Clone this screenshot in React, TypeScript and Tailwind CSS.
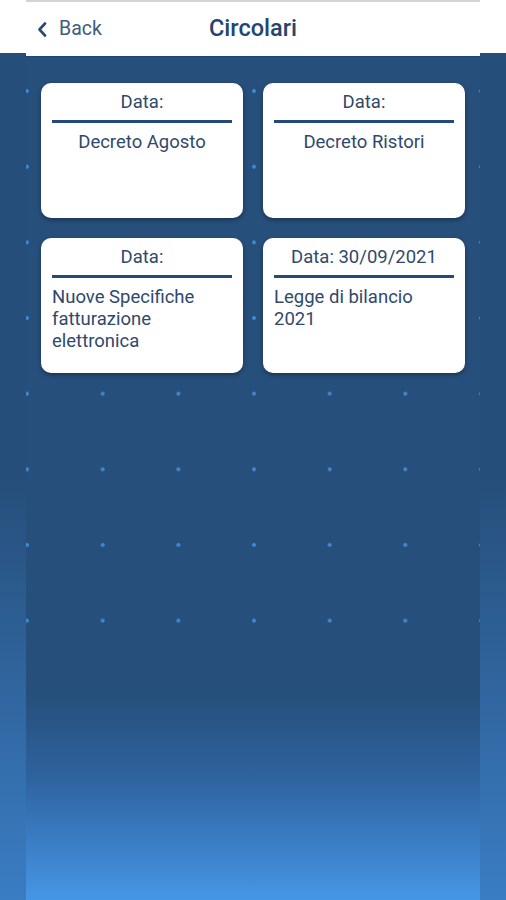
import React from 'react';

const cards = [
  { date: 'Data:', title: 'Decreto Agosto', center: true },
  { date: 'Data:', title: 'Decreto Ristori', center: true },
  { date: 'Data:', title: 'Nuove Specifiche fatturazione elettronica', center: false },
  { date: 'Data: 30/09/2021', title: 'Legge di bilancio 2021', center: false },
];

function Side() {
  return (
    <div className="w-[26px] flex flex-col">
      <div className="h-[53px] bg-white" />
      <div className="flex-1 bg-[linear-gradient(to_bottom,#264e7a_0%,#264e7a_50%,#3a7dc3_100%)]" />
    </div>
  );
}

function Card({ date, title, center }: { date: string; title: string; center: boolean }) {
  return (
    <div className="h-[135px] bg-white rounded-[10px] px-[11px] pt-2 shadow-[0_2px_4px_rgba(0,0,0,0.35)] text-[#30496b] text-[18.5px] leading-[22px]">
      <div className="text-center">{date}</div>
      <div className="h-[3px] bg-[#24497a] mt-[7px] mb-[8px]" />
      <div className={center ? 'text-center' : 'text-left'}>{title}</div>
    </div>
  );
}

export default function App() {
  return (
    <div
      className="w-[506px] h-[900px] flex overflow-hidden"
      style={{ fontFamily: 'Roboto, "Noto Sans", sans-serif' }}
    >
      <Side />
      <div className="w-[454px] flex flex-col">
        <header className="h-[57px] bg-white border-t-2 border-[#d3d3d3] border-b border-b-[#1f4570] flex items-center relative">
          <button className="flex items-center gap-[12px] pl-[11px] text-[#3e5c80] text-[19.5px]">
            <svg width="10" height="15" viewBox="0 0 10 15" fill="none">
              <path d="M8 1.5 L2.5 7.5 L8 13.5" stroke="#2a4b70" strokeWidth="2.6" strokeLinecap="round" strokeLinejoin="round" />
            </svg>
            <span>Back</span>
          </button>
          <h1 className="absolute left-0 right-0 text-center text-[23.5px] font-medium text-[#24466c] pointer-events-none">
            Circolari
          </h1>
        </header>
        <main className="h-[603px] bg-[#274f7b] bg-[radial-gradient(circle,#3f86d0_1.6px,transparent_2.2px)] bg-[length:75.67px_75.67px] bg-[position:-36.8px_-3.8px] px-[15px] pt-[26px]">
          <div className="grid grid-cols-2 gap-[20px]">
            {cards.map((c, i) => (
              <Card key={i} {...c} />
            ))}
          </div>
        </main>
        <div className="flex-1 bg-[linear-gradient(to_bottom,#274f7b_0%,#264f7c_15%,#2f64a0_50%,#4696e6_100%)]" />
      </div>
      <Side />
    </div>
  );
}
